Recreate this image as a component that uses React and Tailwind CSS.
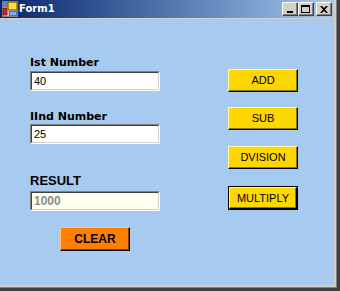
import React from "react";

const sans = { fontFamily: '"Liberation Sans", Arial, sans-serif' };
const deja = { fontFamily: '"DejaVu Sans", Verdana, sans-serif' };

function TitleButton({ children }) {
  return (
    <div className="w-[16px] h-[14px] bg-[#d4d0c8] border-t border-l border-t-white border-l-white border-r border-b border-r-[#404040] border-b-[#404040] shadow-[inset_-1px_-1px_0_#808080] flex items-center justify-center">
      {children}
    </div>
  );
}

function FormIcon() {
  return (
    <svg width="16" height="16" viewBox="0 0 16 16">
      <rect x="0.5" y="0.5" width="15" height="15" fill="#c0c0c0" stroke="#808080" />
      <rect x="1" y="1" width="5" height="5" fill="#6080c0" />
      <rect x="6" y="1" width="9" height="8" fill="#f0c000" stroke="#806000" strokeWidth="1" />
      <rect x="7" y="2" width="7" height="6" fill="#ffe040" />
      <rect x="1" y="7" width="4" height="7" fill="#d02020" stroke="#600000" strokeWidth="0.5" />
      <rect x="7" y="10" width="8" height="5" fill="#4070e0" />
      <rect x="8" y="11" width="6" height="3" fill="#80a8ff" />
    </svg>
  );
}

function Field({ value, result }) {
  return (
    <div className="w-[130px] h-[20px] border-t border-l border-t-[#808080] border-l-[#808080] border-r border-b border-r-white border-b-white">
      <div
        className={
          "w-full h-full border-t border-l border-t-[#404040] border-l-[#404040] border-r border-b border-r-[#d4d0c8] border-b-[#d4d0c8] flex items-center pl-[2px] " +
          (result ? "bg-[#fffff0] text-[12px] font-bold text-[#8c8c8c]" : "bg-white text-[11px] text-black")
        }
        style={sans}
      >
        {value}
      </div>
    </div>
  );
}

function YButton({ label, focused, className }) {
  const inner = (
    <div
      className="w-full h-full bg-[#ffd700] border-t border-l border-t-[#fff6b0] border-l-[#fff6b0] border-r border-b border-r-black border-b-black shadow-[inset_-1px_-1px_0_#8a7400] flex items-center justify-center text-[11px] text-black"
      style={sans}
    >
      {label}
    </div>
  );
  if (focused) {
    return (
      <div className={"w-[70px] h-[24px] border border-black " + (className || "")}>{inner}</div>
    );
  }
  return <div className={"w-[70px] h-[23px] " + (className || "")}>{inner}</div>;
}

export default function App() {
  return (
    <div className="w-[340px] h-[291px] bg-[#404040] pr-[3px] pb-[3px]">
      <div className="w-full h-full bg-[#808080] pr-px pb-px">
        <div className="w-full h-full bg-[#d4d0c8] pr-[2px] pb-[2px] flex flex-col">
          {/* Title bar */}
          <div className="h-[18px] shrink-0 bg-linear-to-r from-[#0a246a] to-[#a6caf0] flex items-center pl-[2px] pr-[2px]">
            <FormIcon />
            <span className="ml-[1px] text-[10px] font-bold text-white leading-none" style={deja}>
              Form1
            </span>
            <div className="ml-auto flex items-center">
              <TitleButton>
                <div className="w-[6px] h-[2px] bg-black mt-[6px] -ml-[1px]" />
              </TitleButton>
              <TitleButton>
                <div className="w-[9px] h-[8px] border border-black border-t-2 -ml-px" />
              </TitleButton>
              <div className="ml-[2px]">
                <TitleButton>
                  <svg width="8" height="7" viewBox="0 0 8 7" className="-ml-px">
                    <path d="M0 0h2l2 2 2-2h2L5 3.5 8 7H6L4 5 2 7H0l3-3.5z" fill="black" />
                  </svg>
                </TitleButton>
              </div>
            </div>
          </div>
          {/* Content */}
          <div className="flex-1 mt-px bg-[#a6caf0] flex pl-[30px]">
            <div className="w-[130px] pt-[37px] flex flex-col">
              <div className="h-[13px] text-[11px] leading-[13px] font-bold text-black" style={deja}>
                Ist Number
              </div>
              <div className="mt-[2px]">
                <Field value="40" />
              </div>
              <div className="mt-[19px] h-[13px] text-[11px] leading-[13px] font-bold text-black" style={deja}>
                IInd Number
              </div>
              <div className="mt-[1px]">
                <Field value="25" />
              </div>
              <div className="mt-[29px] h-[15px] text-[13px] leading-[15px] font-bold text-black" style={sans}>
                RESULT
              </div>
              <div className="mt-[3px]">
                <Field value="1000" result />
              </div>
              <div className="mt-[16px] ml-[30px] w-[70px] h-[24px] bg-[#ff8000] border-t border-l border-t-[#ffc080] border-l-[#ffc080] border-r border-b border-r-black border-b-black shadow-[inset_-1px_-1px_0_#804000] flex items-center justify-center text-[12px] font-bold text-black" style={sans}>
                CLEAR
              </div>
            </div>
            <div className="ml-[68px] w-[70px] pt-[50px] flex flex-col">
              <YButton label="ADD" />
              <YButton label="SUB" className="mt-[15px]" />
              <YButton label="DVISION" className="mt-[16px]" />
              <YButton label="MULTIPLY" focused className="mt-[17px]" />
            </div>
          </div>
        </div>
      </div>
    </div>
  );
}
